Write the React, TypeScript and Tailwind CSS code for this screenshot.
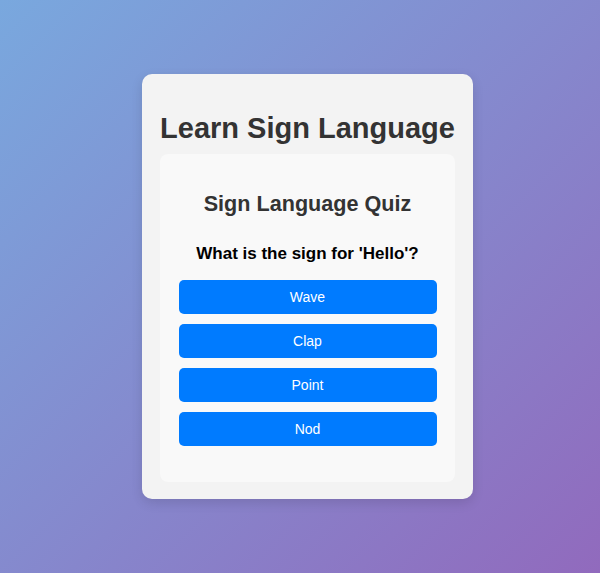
import React from "react";

export default function App() {
  const options = ["Wave", "Clap", "Point", "Nod"];
  return (
    <div
      className="w-full h-[573px] flex items-center justify-center pl-[15px] bg-[linear-gradient(135deg,#79a8de,#916abd)]"
      style={{ fontFamily: '"Liberation Sans", Arial, sans-serif' }}
    >
      <div className="w-[331px] bg-[#f3f3f3] rounded-[10px] shadow-[0_4px_12px_rgba(0,0,0,0.12)] pt-[38px] pb-[17px] px-[18px] flex flex-col">
        <h1 className="text-[29px] leading-[33px] font-bold text-[#333] text-center whitespace-nowrap">
          Learn Sign Language
        </h1>
        <div className="mt-[9.5px] bg-[#f9f9f9] rounded-[8px] pt-[37px] pb-[36px] px-[18.5px] flex flex-col">
          <h2 className="text-[21.6px] leading-[25px] font-bold text-[#333] text-center">
            Sign Language Quiz
          </h2>
          <p className="mt-[27.5px] text-[17px] leading-[20px] font-bold text-black text-center">
            What is the sign for 'Hello'?
          </p>
          <div className="mt-[16.5px] flex flex-col gap-[9.6px]">
            {options.map((o) => (
              <button
                key={o}
                className="h-[34.4px] w-full bg-[#007bff] text-white text-[14px] rounded-[5px] flex items-center justify-center"
              >
                {o}
              </button>
            ))}
          </div>
        </div>
      </div>
    </div>
  );
}
